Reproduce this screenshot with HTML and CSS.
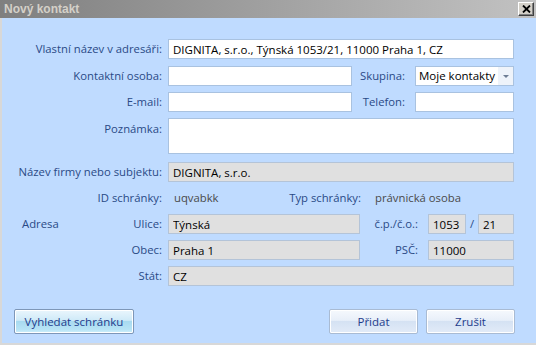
FILE: index.html
```
<!DOCTYPE html>
<html lang="cs">
<head>
    <meta charset="UTF-8">
    <meta name="viewport" content="width=device-width, initial-scale=1.0">
    <title>Nový kontakt</title>
    <link rel="stylesheet" href="styles.css">
</head>
<body>
    <div class="window">
        <div class="titlebar">
            <span class="title">Nový kontakt</span>
            <button class="close" title="Zavřít">
                <svg width="9" height="8" viewBox="0 0 9 8">
                    <path d="M1 0.5 L8 7.5 M8 0.5 L1 7.5" stroke="#000" stroke-width="1.8"/>
                </svg>
            </button>
        </div>

        <div class="form">
            <div class="row r1">
                <label class="lbl">Vlastní název v adresáři:</label>
                <div class="field"><input class="inp full" type="text" value="DIGNITA, s.r.o., Týnská 1053/21, 11000 Praha 1, CZ"></div>
            </div>
            <div class="row">
                <label class="lbl">Kontaktní osoba:</label>
                <div class="field">
                    <input class="inp half" type="text">
                    <label class="lbl2">Skupina:</label>
                    <div class="select">
                        <span>Moje kontakty</span>
                        <span class="arrow"></span>
                    </div>
                </div>
            </div>
            <div class="row">
                <label class="lbl">E-mail:</label>
                <div class="field">
                    <input class="inp half" type="text">
                    <label class="lbl2">Telefon:</label>
                    <input class="inp small" type="text">
                </div>
            </div>
            <div class="row">
                <label class="lbl top">Poznámka:</label>
                <div class="field"><textarea class="inp full note"></textarea></div>
            </div>
            <div class="row r5">
                <label class="lbl">Název firmy nebo subjektu:</label>
                <div class="field"><input class="inp full ro" type="text" value="DIGNITA, s.r.o." readonly></div>
            </div>
            <div class="row">
                <label class="lbl">ID schránky:</label>
                <div class="field">
                    <span class="val idval">uqvabkk</span>
                    <label class="lbl2 typ">Typ schránky:</label>
                    <span class="val typval">právnická osoba</span>
                </div>
            </div>
            <div class="row">
                <div class="lbl split"><span class="group">Adresa</span><span>Ulice:</span></div>
                <div class="field">
                    <input class="inp street ro" type="text" value="Týnská" readonly>
                    <label class="lbl2 addr">č.p./č.o.:</label>
                    <input class="inp cp ro" type="text" value="1053" readonly>
                    <span class="slash">/</span>
                    <input class="inp co ro" type="text" value="21" readonly>
                </div>
            </div>
            <div class="row">
                <label class="lbl">Obec:</label>
                <div class="field">
                    <input class="inp street ro" type="text" value="Praha 1" readonly>
                    <label class="lbl2 addr">PSČ:</label>
                    <input class="inp psc ro" type="text" value="11000" readonly>
                </div>
            </div>
            <div class="row">
                <label class="lbl">Stát:</label>
                <div class="field"><input class="inp full ro" type="text" value="CZ" readonly></div>
            </div>
        </div>

        <div class="buttons">
            <button class="btn search">Vyhledat schránku</button>
            <div class="right">
                <button class="btn">Přidat</button>
                <button class="btn">Zrušit</button>
            </div>
        </div>
    </div>
</body>
</html>
```

FILE: styles.css
```
body {
    margin: 0;
    font-family: "Open Sans", "Noto Sans", sans-serif;
    font-size: 11.3px;
    line-height: 20px;
}

.window {
    width: 536px;
    height: 345px;
    box-sizing: border-box;
    background-color: #bfdbff;
    border-left: 2px solid #d8d8d8;
    border-bottom: 2px solid #d8d8d8;
    display: flex;
    flex-direction: column;
}

.titlebar {
    height: 18px;
    flex-shrink: 0;
    background: linear-gradient(to right, #7f7f7f, #c2c2c2);
    display: flex;
    align-items: center;
    justify-content: space-between;
    padding: 0 2px 0 4px;
    margin-left: -2px;
}

.title {
    font-family: "Liberation Sans", Arial, sans-serif;
    font-weight: bold;
    font-size: 12px;
    color: #d4d0c8;
}

.close {
    width: 16px;
    height: 14px;
    padding: 0;
    background-color: #d4d0c8;
    border: 1px solid;
    border-color: #fff #404040 #404040 #fff;
    box-shadow: inset -1px -1px 0 #808080;
    display: flex;
    align-items: center;
    justify-content: center;
}

.form {
    padding: 21px 22px 0 10px;
    display: flex;
    flex-direction: column;
    gap: 6px;
}

.r1 {
    margin-bottom: 1px;
}

.r5 {
    margin-top: 2px;
}

.row {
    display: flex;
    align-items: center;
    height: 20px;
}

.row:has(.note) {
    height: 36px;
}

.lbl {
    width: 150px;
    flex-shrink: 0;
    text-align: right;
    padding-right: 6px;
    color: #2a4a86;
    white-space: nowrap;
}

.lbl.top {
    align-self: flex-start;
    padding-top: 3px;
    line-height: 16px;
}

.split {
    display: flex;
    justify-content: space-between;
    padding-left: 10px;
    box-sizing: border-box;
    width: 156px;
}

.group {
    color: #2a4a86;
}

.field {
    flex: 1;
    display: flex;
    align-items: center;
}

.inp {
    box-sizing: border-box;
    height: 20px;
    border: 1px solid #a9c2e0;
    background-color: #fff;
    font-family: inherit;
    font-size: 11.5px;
    color: #000;
    padding: 0 4px;
    margin: 0;
}

.full {
    width: 100%;
}

.half {
    width: 184px;
}

.small {
    width: 99px;
}

.psc {
    width: 86px;
}

.note {
    height: 36px;
    resize: none;
}

.ro {
    background-color: #e0e0e0;
    border-color: #b4c4d8;
}

.lbl2 {
    width: 53px;
    text-align: right;
    color: #2a4a86;
    margin-right: 10px;
    white-space: nowrap;
}

.lbl2.addr {
    width: 58px;
}

.street {
    width: 192px;
}

.cp {
    width: 38px;
}

.co {
    width: 36px;
}

.slash {
    width: 12px;
    text-align: center;
    color: #2a4a86;
}

.select {
    box-sizing: border-box;
    width: 99px;
    height: 20px;
    border: 1px solid #a9c2e0;
    background-color: #fff;
    display: flex;
    align-items: center;
    justify-content: space-between;
    padding-left: 3px;
    font-size: 11.5px;
    white-space: nowrap;
}

.arrow {
    width: 15px;
    height: 18px;
    background-color: #eef3fa;
    position: relative;
}

.arrow::after {
    content: "";
    position: absolute;
    left: 5px;
    top: 8px;
    border-left: 3px solid transparent;
    border-right: 3px solid transparent;
    border-top: 3px solid #6d7d94;
}

.val {
    color: #4a4a4a;
    white-space: nowrap;
}

.idval {
    width: 113px;
    padding-left: 6px;
}

.typ {
    width: 74px;
    margin-right: 14px;
}

.buttons {
    margin-top: auto;
    padding: 0 21px 9px 12px;
    display: flex;
    justify-content: space-between;
}

.right {
    display: flex;
    gap: 8px;
}

.btn {
    width: 89px;
    height: 25px;
    border: 1px solid #a9bbd3;
    border-radius: 2px;
    background: linear-gradient(to bottom, #f6f9fd 0%, #e8eff9 45%, #d5e2f3 50%, #e2ebf8 100%);
    box-shadow: inset 0 0 0 1px #fff;
    font-family: inherit;
    font-size: 11.5px;
    color: #1e3c8c;
    padding: 0;
}

.btn.search {
    width: 120px;
    border-color: #7e97b8;
    background: linear-gradient(to bottom, #eaf6fd 0%, #cfeaf8 45%, #a8daf0 50%, #b8e4f6 85%, #d0f0fc 100%);
}
```
